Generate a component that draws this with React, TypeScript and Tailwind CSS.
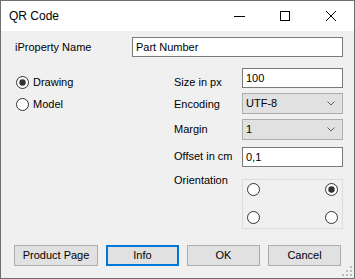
import React from 'react';

function Radio({ checked }: { checked?: boolean }) {
  return (
    <svg width="13" height="13" viewBox="0 0 13 13" className="shrink-0">
      <circle cx="6.5" cy="6.5" r="6" fill="#fff" stroke="#333" strokeWidth="1" />
      {checked && <circle cx="6.5" cy="6.5" r="3.2" fill="#333" />}
    </svg>
  );
}

function Chevron() {
  return (
    <svg width="8" height="5" viewBox="0 0 8 5" className="shrink-0">
      <path d="M0.5 0.5 L4 4 L7.5 0.5" fill="none" stroke="#606060" strokeWidth="1" />
    </svg>
  );
}

function TextBox({ value }: { value: string }) {
  return (
    <div className="w-[101px] h-[20px] border border-[#7a7a7a] bg-white pl-[3px] flex items-center text-black">
      {value}
    </div>
  );
}

function Combo({ value }: { value: string }) {
  return (
    <div className="w-[101px] h-[21px] border border-[#adadad] bg-[#e1e1e1] pl-[3px] pr-[7px] flex items-center justify-between text-black">
      <span>{value}</span>
      <Chevron />
    </div>
  );
}

function Btn({ label, w, focused }: { label: string; w: string; focused?: boolean }) {
  return (
    <div
      className={`${w} h-[21px] bg-[#e1e1e1] flex items-center justify-center text-black ${
        focused ? 'border-2 border-[#0078d7]' : 'border border-[#adadad]'
      }`}
    >
      {label}
    </div>
  );
}

export default function App() {
  return (
    <div
      className="w-[355px] h-[279px] border border-[#6f6f6f] bg-[#f0f0f0] flex flex-col relative text-[11px] leading-[13px]"
      style={{ fontFamily: '"Liberation Sans", Arial, sans-serif' }}
    >
      {/* title bar */}
      <div className="h-[30px] bg-white flex items-center shrink-0">
        <span className="pl-[8px] text-[12px] text-black">QR Code</span>
        <div className="ml-auto flex items-center h-full">
          <div className="w-[46px] h-full flex items-center justify-center">
            <div className="w-[11px] h-px bg-black" />
          </div>
          <div className="w-[46px] h-full flex items-center justify-center">
            <div className="w-[10px] h-[10px] border border-black" />
          </div>
          <div className="w-[46px] h-full flex items-center justify-center">
            <svg width="10" height="10" viewBox="0 0 10 10">
              <path d="M0 0 L10 10 M10 0 L0 10" stroke="#000" strokeWidth="1" />
            </svg>
          </div>
        </div>
      </div>

      {/* body */}
      <div className="flex flex-col flex-1">
        <div className="flex items-center mt-[6px] h-[20px]">
          <span className="pl-[14px] text-black">iProperty Name</span>
          <div className="ml-auto mr-[11px] w-[211px] h-[20px] border border-[#7a7a7a] bg-white pl-[3px] flex items-center text-black">
            Part Number
          </div>
        </div>

        <div className="flex mt-[11px]">
          <div className="pl-[15px] pt-[8px] flex flex-col gap-[9px] w-[173px]">
            <div className="flex items-center gap-[4px] h-[13px]">
              <Radio checked />
              <span className="text-black">Drawing</span>
            </div>
            <div className="flex items-center gap-[4px] h-[13px]">
              <Radio />
              <span className="text-black">Model</span>
            </div>
          </div>

          <div className="flex flex-col">
            <div className="flex">
              <span className="w-[68px] mt-[8px] text-black">Size in px</span>
              <TextBox value="100" />
            </div>
            <div className="flex mt-[4px]">
              <span className="w-[68px] mt-[5px] text-black">Encoding</span>
              <Combo value="UTF-8" />
            </div>
            <div className="flex mt-[5px]">
              <span className="w-[68px] mt-[4px] text-black">Margin</span>
              <Combo value="1" />
            </div>
            <div className="flex mt-[7px]">
              <span className="w-[68px] mt-[3px] text-black">Offset in cm</span>
              <TextBox value="0,1" />
            </div>
            <div className="flex mt-[7px]">
              <span className="w-[68px] text-black">Orientation</span>
              <div className="mt-[5px] w-[101px] h-[50px] border border-[#dcdcdc] px-[4px] pt-[3px] flex flex-col gap-[15px]">
                <div className="flex justify-between">
                  <Radio />
                  <Radio checked />
                </div>
                <div className="flex justify-between">
                  <Radio />
                  <Radio />
                </div>
              </div>
            </div>
          </div>
        </div>

        <div className="flex gap-[8px] pl-[13px] mt-[16px]">
          <Btn label="Product Page" w="w-[84px]" />
          <Btn label="Info" w="w-[73px]" focused />
          <Btn label="OK" w="w-[73px]" />
          <Btn label="Cancel" w="w-[73px]" />
        </div>
      </div>

      {/* size grip */}
      <svg width="10" height="10" viewBox="0 0 10 10" className="absolute right-[2px] bottom-[2px]">
        {[
          [8, 0],
          [8, 4],
          [4, 4],
          [8, 8],
          [4, 8],
          [0, 8],
        ].map(([x, y], i) => (
          <rect key={i} x={x} y={y} width="2" height="2" fill="#bcbcbc" />
        ))}
      </svg>
    </div>
  );
}
